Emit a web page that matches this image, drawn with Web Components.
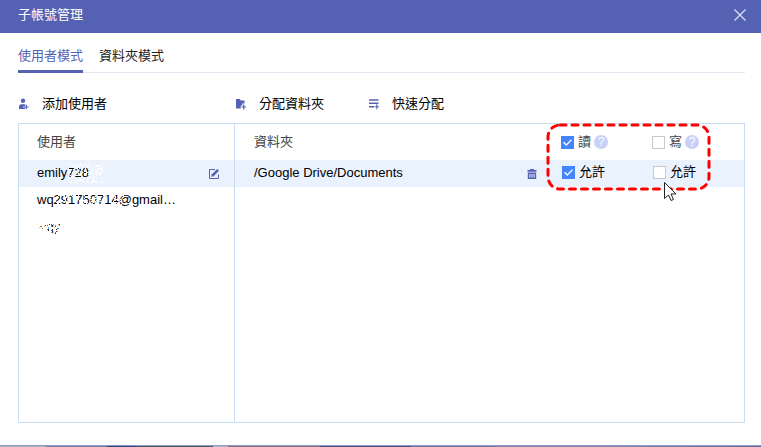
<!DOCTYPE html>
<html lang="zh-Hant">
<head>
<meta charset="utf-8">
<title>子帳號管理</title>
<style>
  html, body { height: 100%; }
  body {
    margin: 0;
    background: #fff;
    color: #000;
    font: 13px/20px "Liberation Sans", "Noto Sans CJK TC", sans-serif;
    --brand: #5561b3;
    --edge: #c8dcf4;
    --row: #eaf2fe;
    --muted: #444;
  }
</style>
</head>
<body>
<account-window>
  <title-bar slot="title">子帳號管理</title-bar>
  <mode-tabs>
    <mode-tab active>使用者模式</mode-tab>
    <mode-tab>資料夾模式</mode-tab>
  </mode-tabs>
  <tool-bar>
    <tool-button class="add" icon="user">添加使用者</tool-button>
    <tool-button class="assign" icon="folder">分配資料夾</tool-button>
    <tool-button icon="list">快速分配</tool-button>
  </tool-bar>
  <split-panel>
    <user-table slot="users"></user-table>
    <folder-table slot="folders"></folder-table>
    <highlight-frame slot="overlay"></highlight-frame>
  </split-panel>
</account-window>

<script>
const ICONS = {
  user: '<circle cx="5" cy="2.8" r="2.2"/><path d="M1 11V9Q1 6.3 3.5 6.3H6.5L8 7H7V8.3H5.5V9.8H7V11Z"/><path d="M8.3 6.8V11.2M6.1 9H10.5" fill="none" stroke="currentColor" stroke-width="1.1"/>',
  folder: '<path d="M1 1H4.500L6 2.500H9.500V5.500H7.300V7.500H5.700V10.500H1Z"/><path d="M8.700 6.500V11.500M6.400 9H11" fill="none" stroke="currentColor" stroke-width="1.2"/>',
  list: '<path d="M1 2H10.500M1 5.300H10.500M1 8.700H6" fill="none" stroke="currentColor" stroke-width="1.4"/><path d="M8.800 6.300V11.300M6.500 8.800H11" fill="none" stroke="currentColor" stroke-width="1.1"/>',
  edit: '<path d="M7 1.500H1.500V10.500H10.500V6.500" fill="none" stroke="currentColor" stroke-width="1"/><path d="M3.200 8.800L3.800 6.300L9.200 1L11 2.800L5.700 8.200Z"/>',
  trash: '<path d="M1.500 2H4V1H8V2H10.500V3.800H1.500Z"/><path fill-rule="evenodd" d="M1.800 4.500H10.200V11H1.800ZM3.400 6V9.500H4.400V6ZM5.500 6V9.500H6.500V6ZM7.600 6V9.500H8.600V6Z"/>'
};
const icon = name =>
  `<svg width="12" height="12" viewBox="0 0 12 12" fill="currentColor" aria-hidden="true">${ICONS[name]}</svg>`;

const BUTTON = `button { all: unset; box-sizing: border-box; cursor: pointer; }
  button:focus-visible { outline: 1px solid var(--brand); }`;

const TABLE = `
  table { width: 100%; border-collapse: collapse; table-layout: fixed; }
  th, td { padding: 0; text-align: left; font-weight: 400; white-space: nowrap; }
  th { height: 36px; color: var(--muted); }
  td { height: 27px; box-sizing: border-box; }
  td:first-child { padding-bottom: 2px; }
  tr.selected { background: var(--row); }
  svg { display: block; color: var(--brand); }
  ${BUTTON}
  button { display: block; }`;

function define(name, html, setup) {
  customElements.define(name, class extends HTMLElement {
    constructor() {
      super();
      this.attachShadow({ mode: 'open' });
    }
    connectedCallback() {
      this.shadowRoot.innerHTML = typeof html === 'function' ? html(this) : html;
      if (setup) setup(this);
    }
  });
}

define('account-window', `
  <style>
    :host { display: flex; flex-direction: column; min-height: 100vh; box-sizing: border-box; }
    main { flex: 1; display: flex; flex-direction: column; padding: 12px 16px 22px 18px;
      border-bottom: 1px solid #8f98d0; }
    .desktop { height: 1px; background: linear-gradient(90deg, #aeb2b4 6%, #71849a 6% 14%, #2c4270 14% 18%, #465f5c 18% 28%, #b4b4c4 28% 30%, #85716f 30% 42%, #444e70 42% 54%, #6f7891 54% 65%, #85849c 65% 80%, #666f90); }
  </style>
  <slot name="title"></slot>
  <main><slot></slot></main>
  <div class="desktop"></div>`);

define('title-bar', `
  <style>
    :host { display: block; background: var(--brand); color: #fff; }
    header { display: flex; align-items: center; justify-content: space-between; height: 33px; padding: 0 15px 3px 18px; box-sizing: border-box; }
    h1 { margin: 0; font: inherit; }
    ${BUTTON}
    svg { display: block; }
  </style>
  <header><h1><slot></slot></h1>
    <button aria-label="關閉"><svg width="12" height="12" viewBox="0 0 12 12"><path d="M0.5 0.5L11.5 11.5M11.5 0.5L0.5 11.5" stroke="#dfe2f5" stroke-width="1.2"/></svg></button>
  </header>`);

define('mode-tabs', `
  <style>
    :host { display: block; border-bottom: 1px solid #e3e5f0; }
    nav { display: flex; gap: 16px; margin-bottom: -1px; }
  </style>
  <nav><slot></slot></nav>`);

define('mode-tab', `
  <style>
    :host { display: block; color: #222; }
    :host([active]) { color: var(--brand); }
    ${BUTTON}
    button { display: block; padding: 1px 0 4px; border-bottom: 3px solid transparent; }
    :host([active]) button { border-color: var(--brand); }
  </style>
  <button><slot></slot></button>`);

define('tool-bar', `
  <style>
    :host { display: flex; padding: 21px 0 9px; }
    ::slotted(.add) { width: 217px; }
    ::slotted(.assign) { width: 133px; }
  </style>
  <slot></slot>`);

define('tool-button', el => `
  <style>
    :host { display: block; }
    ${BUTTON}
    button { display: flex; align-items: center; gap: 12px; }
    svg { color: var(--brand); }
  </style>
  <button>${icon(el.getAttribute('icon'))}<span><slot></slot></span></button>`);

define('split-panel', `
  <style>
    :host { flex: 1; position: relative; display: grid; grid-template-columns: 216px 1fr; border: 1px solid var(--edge); }
    .users { border-right: 1px solid var(--edge); }
    .users, .folders { min-width: 0; box-sizing: border-box; }
  </style>
  <div class="users"><slot name="users"></slot></div>
  <div class="folders"><slot name="folders"></slot></div>
  <slot name="overlay"></slot>`);

define('user-table', `
  <style>
    :host { display: block; }
    ${TABLE}
    th:first-child, td:first-child { padding-left: 18px; }
    .action { width: 26px; }
    .name { display: inline-block; position: relative; }
    canvas { position: absolute; top: 0; height: 20px; }
  </style>
  <table>
    <thead><tr><th>使用者</th><th class="action"></th></tr></thead>
    <tbody>
      <tr class="selected"><td><span class="name">emily728<canvas data-from="30" data-to="66" data-density="0.3" data-fill="#fff" height="20"></canvas></span></td><td><button aria-label="編輯">${icon('edit')}</button></td></tr>
      <tr><td><span class="name">wq291750714@gmail…<canvas data-from="16" data-to="88" data-density="0.22" data-fill="#fff" height="20"></canvas></span></td><td></td></tr>
      <tr><td><span class="name">wqy<canvas data-from="0" data-to="10" data-density="0.8" data-fill="#fff" height="20"></canvas><canvas data-from="10" data-to="24" data-density="0.45" data-fill="#fff" height="20"></canvas></span></td><td></td></tr>
    </tbody>
  </table>`, el => {
  let seed = 7;
  const random = () => (seed = (seed * 16807) % 2147483647) / 2147483647;
  for (const c of el.shadowRoot.querySelectorAll('canvas')) {
    const from = +c.dataset.from, width = +c.dataset.to - from;
    c.width = width;
    c.style.left = from + 'px';
    const g = c.getContext('2d');
    g.fillStyle = c.dataset.fill;
    for (let y = 0; y < 20; y++)
      for (let x = 0; x < width; x++)
        if (random() < c.dataset.density) g.fillRect(x, y, 1, 1);
  }
});

define('check-box', el => `
  <style>
    :host { display: inline-flex; align-items: center; }
    label { display: flex; align-items: center; gap: 4px; }
    input { appearance: none; margin: 0; width: 13px; height: 13px; box-sizing: border-box; border: 1px solid #c8c8c8; background: #fff; }
    input:checked { border-color: #4285ff; background: #4285ff url('data:image/svg+xml,<svg xmlns="http://www.w3.org/2000/svg" viewBox="0 0 11 11"><path d="M1.5 5.2L4.3 8L9.5 2.8" fill="none" stroke="white" stroke-width="1.3"/></svg>'); }
  </style>
  <label><input type="checkbox" ${el.hasAttribute('checked') ? 'checked' : ''}><span><slot></slot></span></label>`);

define('help-badge', `
  <style>
    :host { display: inline-block; }
    ${BUTTON}
    button { display: block; width: 14px; height: 14px; border-radius: 50%; background: #c9d0f8; color: #fff; font-size: 12px; line-height: 14px; text-align: center; }
  </style>
  <button aria-label="說明">?</button>`);

define('folder-table', `
  <style>
    :host { display: block; }
    ${TABLE}
    th:first-child, td:first-child { padding-left: 19px; }
    .action { width: 35px; }
    .read { width: 91px; }
    .write { width: 92px; }
    .head { display: flex; align-items: center; gap: 3px; }
    td check-box { padding-left: 1px; }
  </style>
  <table>
    <thead><tr><th>資料夾</th><th class="action"></th>
      <th class="read"><div class="head"><check-box checked>讀</check-box><help-badge></help-badge></div></th>
      <th class="write"><div class="head"><check-box>寫</check-box><help-badge></help-badge></div></th></tr></thead>
    <tbody><tr class="selected"><td>/Google Drive/Documents</td>
      <td><button aria-label="刪除">${icon('trash')}</button></td>
      <td><check-box checked>允許</check-box></td>
      <td><check-box>允許</check-box></td></tr></tbody>
  </table>`);

define('highlight-frame', `
  <style>
    :host { position: absolute; top: -1px; right: 33px; pointer-events: none; }
    svg { display: block; }
  </style>
  <svg width="165" height="82" viewBox="0 0 165 82" fill="none" aria-hidden="true">
    <rect x="2" y="2" width="161" height="64" rx="12" stroke="#f00" stroke-width="3" stroke-linecap="round" stroke-dasharray="6 6"/>
    <path d="M118.500 59.500V75.500L122.500 72L125 77.500L127.500 76.500L125 71H130Z" fill="#fff" stroke="#222"/>
  </svg>`);
</script>
</body>
</html>
